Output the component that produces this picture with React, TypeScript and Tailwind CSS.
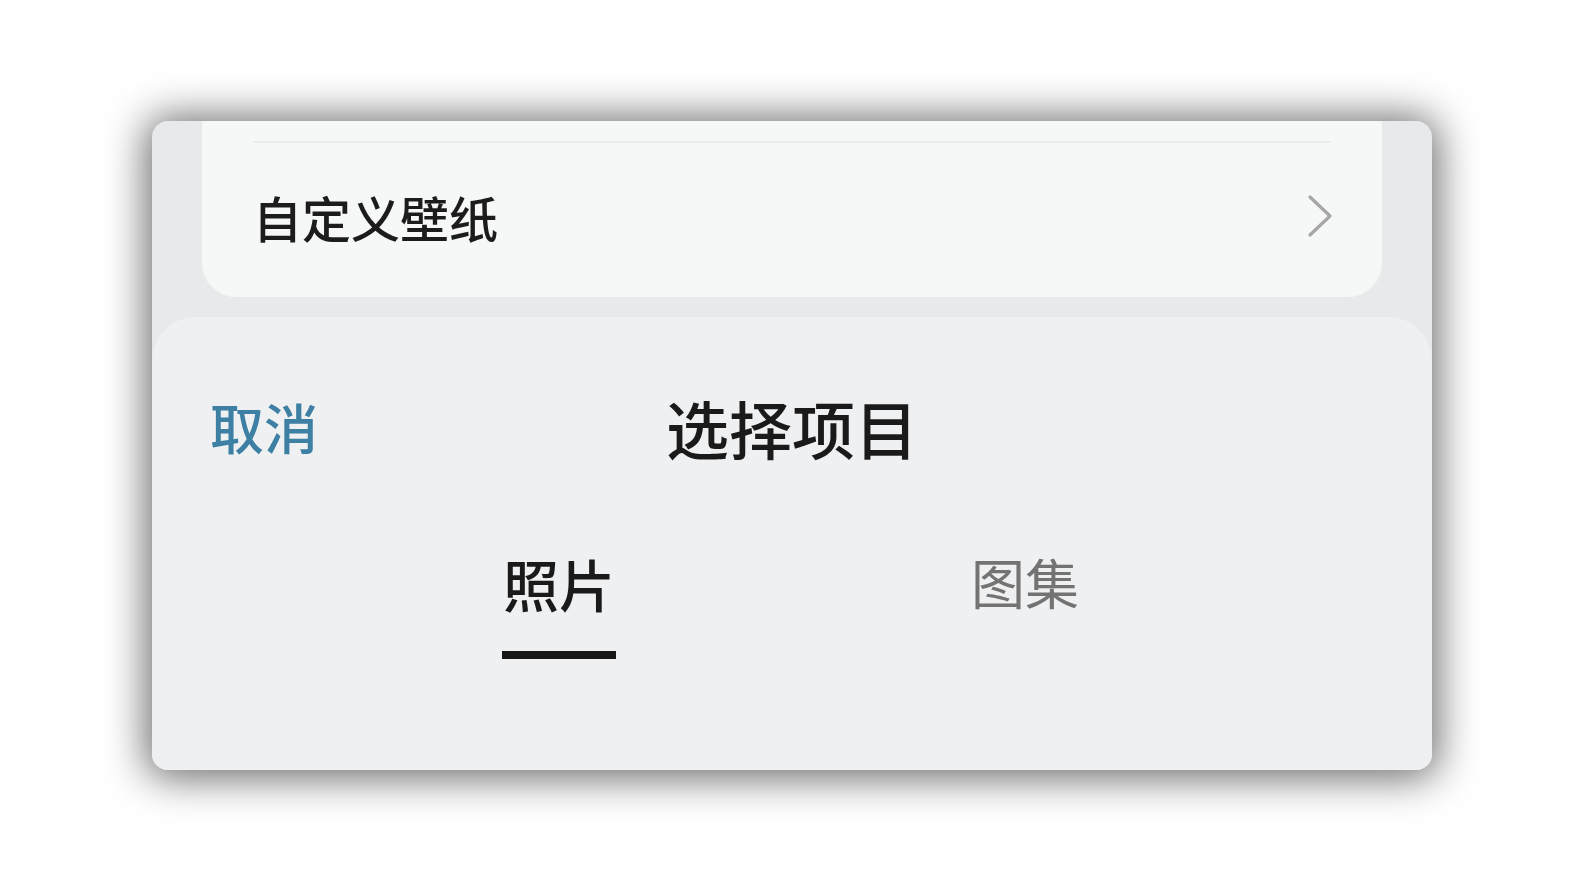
const font = { fontFamily: '"Noto Sans CJK SC", "Noto Sans", sans-serif' }

function Chevron() {
  return (
    <svg width="26" height="44" viewBox="0 0 26 44" fill="none" className="text-[#a6a6a6]">
      <polyline points="3,3 23,22 3,41" stroke="currentColor" strokeWidth="3.2" strokeLinecap="round" strokeLinejoin="round" />
    </svg>
  )
}

export default function App() {
  return (
    <div className="w-[1584px] h-[891px] bg-white pt-[121px] pl-[152px]" style={font}>
      <div className="w-[1280px] h-[649px] rounded-[16px] overflow-hidden bg-[#e8e9eb] shadow-[0_2px_40px_6px_rgba(0,0,0,0.58)] flex flex-col">
        {/* settings list, scrolled up behind the sheet */}
        <div className="mx-[50px] h-[176px] shrink-0 rounded-b-[34px] bg-[#f6f7f7] px-[51px] flex flex-col">
          <div className="mt-[20px] h-[2px] bg-[#ebecec]" />
          <div className="flex-1 flex items-center justify-between pb-[8px]">
            <span className="text-[49px] leading-none font-medium text-[#1c1c1c]">自定义壁纸</span>
            <div className="-mr-[2px]">
              <Chevron />
            </div>
          </div>
        </div>

        {/* bottom sheet */}
        <div className="mt-[20px] flex-1 rounded-t-[44px] bg-[#eff0f2] flex flex-col">
          <div className="grid grid-cols-[1fr_auto_1fr] items-center px-[58px] pt-[78px]">
            <span className="text-[54px] leading-none font-medium text-[#3d80a4]">取消</span>
            <span className="text-[63px] leading-none font-medium text-[#1a1a1a]">选择项目</span>
            <span />
          </div>
          <div className="grid grid-cols-2 px-[174px] mt-[97px]">
            <div className="flex flex-col items-center">
              <span className="text-[56px] leading-none font-medium text-[#1a1a1a]">照片</span>
              <div className="mt-[40px] w-[114px] h-[8px] bg-[#171717]" />
            </div>
            <div className="flex flex-col items-center">
              <span className="text-[54px] leading-none text-[#737373]">图集</span>
            </div>
          </div>
        </div>
      </div>
    </div>
  )
}
